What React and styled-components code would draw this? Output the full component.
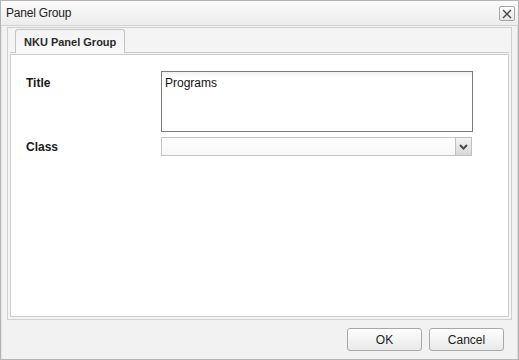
import React from "react";
import styled, { createGlobalStyle } from "styled-components";

const Global = createGlobalStyle`
  html, body { margin: 0; padding: 0; background: #ffffff; }
  body { font-family: "Liberation Sans", Arial, sans-serif; }
  * { box-sizing: border-box; }
`;

const Window = styled.div`
  width: 519px;
  height: 360px;
  border: 1px solid #b4b4b4;
  background: #f2f2f2;
  display: flex;
  flex-direction: column;
  box-shadow: inset 1px 0 0 #e4e4e4, inset -1px 0 0 #dadada;
`;

const TitleBar = styled.div`
  height: 25px;
  flex: none;
  display: flex;
  align-items: center;
  justify-content: space-between;
  padding: 0 3px 0 5px;
  background: linear-gradient(#fbfbfb, #ececec);
  border-bottom: 1px solid #d2d2d2;
`;

const TitleText = styled.span`
  font-size: 12px;
  color: #222;
  letter-spacing: -0.2px;
`;

const CloseButton = styled.button`
  width: 16px;
  height: 15px;
  padding: 0;
  border: 1px solid #a4a4a4;
  border-radius: 2px;
  background: linear-gradient(#ffffff, #e6e6e6);
  display: flex;
  align-items: center;
  justify-content: center;
  margin-top: 1px;
`;

const Panel = styled.div`
  flex: 1;
  margin: 1px 6px 0 6px;
  border: 1px solid #d0d0d0;
  background: #f4f4f4;
  padding: 0 2px 2px 2px;
  display: flex;
  flex-direction: column;
`;

const TabStrip = styled.div`
  height: 25px;
  flex: none;
  display: flex;
  align-items: flex-end;
  padding-left: 5px;
  border-bottom: 1px solid #cbcbcb;
`;

const Tab = styled.div`
  height: 24px;
  margin-bottom: -1px;
  padding: 0 8px;
  display: flex;
  align-items: center;
  border: 1px solid #c2c2c2;
  border-bottom: none;
  border-radius: 3px 3px 0 0;
  background: linear-gradient(#f3f3f3, #f9f9f9);
  font-size: 11px;
  font-weight: bold;
  color: #2a2a2a;
`;

const Content = styled.div`
  flex: 1;
  margin-top: 1px;
  border: 1px solid #cdcdcd;
  background: #ffffff;
  padding: 16px 0 0 15px;
`;

const Form = styled.div`
  display: grid;
  grid-template-columns: 135px 311px;
  row-gap: 5px;
`;

const Label = styled.label`
  font-size: 12px;
  font-weight: bold;
  color: #1a1a1a;
  padding-top: ${(p) => p.$top}px;
`;

const TextArea = styled.div`
  height: 61px;
  border: 1px solid #7b7b7b;
  background: linear-gradient(#f1f1f1, #ffffff 6px);
  padding: 4px 3px;
  font-size: 12px;
  color: #111;
  margin-right: -1px;
`;

const Select = styled.div`
  height: 19px;
  display: flex;
  border: 1px solid #c4c4c4;
  border-right: none;
  background: linear-gradient(#ffffff, #f7f7f7);
`;

const SelectValue = styled.div`
  flex: 1;
`;

const Trigger = styled.div`
  width: 17px;
  margin: -1px 0;
  border: 1px solid #c0c0c0;
  background: linear-gradient(#f4f4f4, #d8d8d8);
  display: flex;
  align-items: center;
  justify-content: center;
`;

const Footer = styled.div`
  height: 39px;
  flex: none;
  display: flex;
  justify-content: flex-end;
  align-items: flex-start;
  gap: 7px;
  padding: 8px 14px 0 0;
`;

const Button = styled.button`
  width: 75px;
  height: 23px;
  border: 1px solid #a8a8a8;
  border-radius: 3px;
  background: linear-gradient(#fefefe, #e9e9e9);
  font-family: "Liberation Sans", Arial, sans-serif;
  font-size: 12px;
  color: #222;
  padding: 0;
`;

export default function App() {
  return (
    <>
      <Global />
      <Window>
        <TitleBar>
          <TitleText>Panel Group</TitleText>
          <CloseButton aria-label="close">
            <svg width="10" height="10" viewBox="0 0 10 10">
              <path d="M1 1 L9 9 M9 1 L1 9" stroke="#444" strokeWidth="1.3" fill="none" />
            </svg>
          </CloseButton>
        </TitleBar>
        <Panel>
          <TabStrip>
            <Tab>NKU Panel Group</Tab>
          </TabStrip>
          <Content>
            <Form>
              <Label $top={5}>Title</Label>
              <TextArea>Programs</TextArea>
              <Label $top={3}>Class</Label>
              <Select>
                <SelectValue />
                <Trigger>
                  <svg width="9" height="6" viewBox="0 0 9 6">
                    <path d="M1 1 L4.5 4.5 L8 1" stroke="#4a4a4a" strokeWidth="2" fill="none" />
                  </svg>
                </Trigger>
              </Select>
            </Form>
          </Content>
        </Panel>
        <Footer>
          <Button>OK</Button>
          <Button>Cancel</Button>
        </Footer>
      </Window>
    </>
  );
}
